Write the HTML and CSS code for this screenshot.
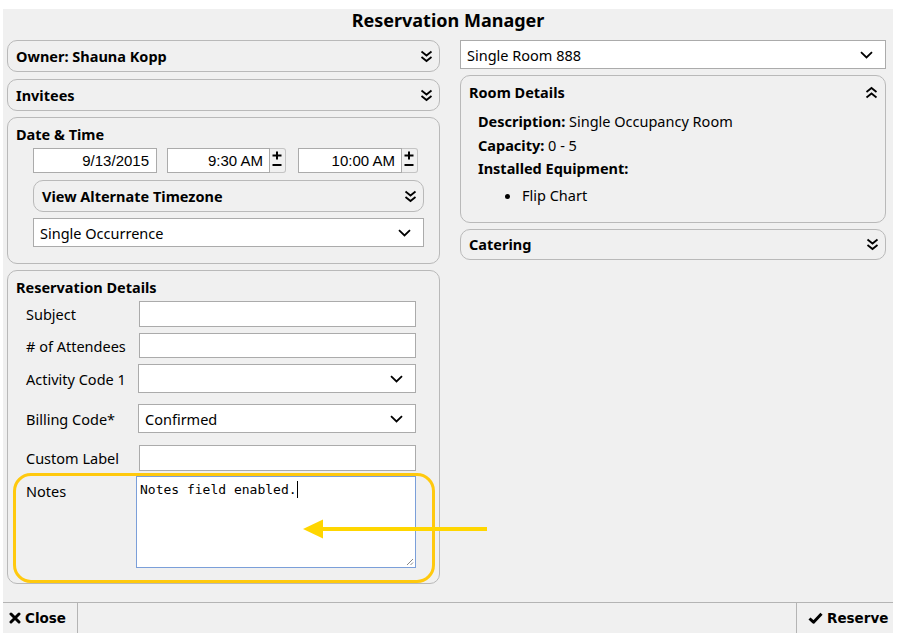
FILE: index.html
```html
<!DOCTYPE html>
<html>
<head>
<meta charset="utf-8">
<link rel="stylesheet" href="styles.css">
</head>
<body>
<div class="app">
  <header class="title">Reservation Manager</header>
  <main class="main">
    <div class="col left">
      <section class="panel collapsed owner">
        <h2 class="panel-title">Owner: Shauna Kopp</h2>
        <svg class="dchev" width="13" height="13" viewBox="0 0 13 13"><path d="M1.5 1.5 L6.5 5.5 L11.5 1.5 M1.5 7 L6.5 11 L11.5 7" fill="none" stroke="#000" stroke-width="1.8"/></svg>
      </section>
      <section class="panel collapsed">
        <h2 class="panel-title">Invitees</h2>
        <svg class="dchev" width="13" height="13" viewBox="0 0 13 13"><path d="M1.5 1.5 L6.5 5.5 L11.5 1.5 M1.5 7 L6.5 11 L11.5 7" fill="none" stroke="#000" stroke-width="1.8"/></svg>
      </section>
      <section class="panel datetime">
        <h2 class="panel-title">Date &amp; Time</h2>
        <div class="dt-body">
          <div class="dt-row">
            <div class="text-input num date-input">9/13/2015</div>
            <div class="time">
              <div class="text-input num time-input">9:30 AM</div>
              <div class="spin"><svg width="16" height="25" viewBox="0 0 16 25"><path d="M3.5 6.5 H12.5 M8 2.5 V10.5 M3.5 16 H12.5" stroke="#000" stroke-width="2" fill="none"/></svg></div>
            </div>
            <div class="time">
              <div class="text-input num time-input">10:00 AM</div>
              <div class="spin"><svg width="16" height="25" viewBox="0 0 16 25"><path d="M3.5 6.5 H12.5 M8 2.5 V10.5 M3.5 16 H12.5" stroke="#000" stroke-width="2" fill="none"/></svg></div>
            </div>
          </div>
          <section class="panel collapsed alt-tz">
            <h2 class="panel-title">View Alternate Timezone</h2>
            <svg class="dchev" width="13" height="13" viewBox="0 0 13 13"><path d="M1.5 1.5 L6.5 5.5 L11.5 1.5 M1.5 7 L6.5 11 L11.5 7" fill="none" stroke="#000" stroke-width="1.8"/></svg>
          </section>
          <div class="select">
            <span>Single Occurrence</span>
            <svg width="13" height="8" viewBox="0 0 13 8"><path d="M1 1.2 L6.5 6.5 L12 1.2" fill="none" stroke="#000" stroke-width="1.8"/></svg>
          </div>
        </div>
      </section>
      <section class="panel details">
        <h2 class="panel-title">Reservation Details</h2>
        <div class="form">
          <div class="row r-subject">
            <span class="label">Subject</span>
            <div class="text-input field"></div>
          </div>
          <div class="row r-attendees">
            <span class="label"># of Attendees</span>
            <div class="text-input field"></div>
          </div>
          <div class="row r-select">
            <span class="label">Activity Code 1</span>
            <div class="select field-select">
              <span></span>
              <svg width="13" height="8" viewBox="0 0 13 8"><path d="M1 1.2 L6.5 6.5 L12 1.2" fill="none" stroke="#000" stroke-width="1.8"/></svg>
            </div>
          </div>
          <div class="row r-select r-billing">
            <span class="label">Billing Code*</span>
            <div class="select field-select">
              <span>Confirmed</span>
              <svg width="13" height="8" viewBox="0 0 13 8"><path d="M1 1.2 L6.5 6.5 L12 1.2" fill="none" stroke="#000" stroke-width="1.8"/></svg>
            </div>
          </div>
          <div class="row r-custom">
            <span class="label">Custom Label</span>
            <div class="text-input field"></div>
          </div>
          <div class="row r-notes">
            <span class="label">Notes</span>
            <div class="textarea"><span class="mono">Notes field enabled.</span><span class="caret"></span>
              <svg class="grip" width="9" height="9" viewBox="0 0 9 9"><path d="M8 2 L2 8 M8 5.5 L5.5 8" stroke="#888" stroke-width="1"/></svg>
            </div>
            <div class="highlight"></div>
            <svg class="arrow" width="186" height="22" viewBox="0 0 186 22"><path d="M0 10 L20 0.5 L20 19.5 Z" fill="#ffd600"/><rect x="18" y="8" width="166" height="4" fill="#ffd600"/></svg>
          </div>
        </div>
      </section>
    </div>
    <div class="col right">
      <div class="select room-select">
        <span>Single Room 888</span>
        <svg width="13" height="8" viewBox="0 0 13 8"><path d="M1 1.2 L6.5 6.5 L12 1.2" fill="none" stroke="#000" stroke-width="1.8"/></svg>
      </div>
      <section class="panel room">
        <div class="room-head">
          <h2 class="panel-title">Room Details</h2>
          <svg class="dchev" width="13" height="13" viewBox="0 0 13 13"><path d="M1.5 6 L6.5 2 L11.5 6 M1.5 11.5 L6.5 7.5 L11.5 11.5" fill="none" stroke="#000" stroke-width="1.8"/></svg>
        </div>
        <div class="room-body">
          <p class="line"><b>Description:</b> Single Occupancy Room</p>
          <p class="line"><b>Capacity:</b> 0 - 5</p>
          <p class="line"><b>Installed Equipment:</b></p>
          <ul class="equip"><li>Flip Chart</li></ul>
        </div>
      </section>
      <section class="panel collapsed catering">
        <h2 class="panel-title">Catering</h2>
        <svg class="dchev" width="13" height="13" viewBox="0 0 13 13"><path d="M1.5 1.5 L6.5 5.5 L11.5 1.5 M1.5 7 L6.5 11 L11.5 7" fill="none" stroke="#000" stroke-width="1.8"/></svg>
      </section>
    </div>
  </main>
  <footer class="footer">
    <div class="btn close">
      <svg width="12" height="12" viewBox="0 0 12 12"><path d="M2 2 L10 10 M10 2 L2 10" stroke="#000" stroke-width="3" stroke-linecap="round"/></svg>
      <span>Close</span>
    </div>
    <div class="btn reserve">
      <svg width="15" height="12" viewBox="0 0 15 12"><path d="M1.5 6.5 L5.5 10.2 L13.5 1.8" fill="none" stroke="#000" stroke-width="3" stroke-linejoin="round"/></svg>
      <span>Reserve</span>
    </div>
  </footer>
</div>
</body>
</html>
```
FILE: styles.css
```css
html, body {
  margin: 0;
  padding: 0;
  background: #ffffff;
}

.app {
  margin: 9px 0 0 3px;
  width: 890px;
  height: 624px;
  background: #f0f0f0;
  display: flex;
  flex-direction: column;
  font-family: "Noto Sans", "Open Sans", sans-serif;
  font-size: 14.5px;
  color: #000;
}

.title {
  height: 31px;
  line-height: 22px;
  text-align: center;
  font-weight: bold;
  font-size: 18px;
}

.main {
  flex: 1;
  display: flex;
  gap: 20px;
  padding: 0 7px 0 4px;
  align-items: flex-start;
}

.col {
  display: flex;
  flex-direction: column;
  gap: 6px;
}

.left { width: 433px; }
.right { width: 426px; }

.panel {
  border: 1px solid #b9b9b9;
  border-radius: 10px;
  box-sizing: border-box;
}

.panel-title {
  margin: 0;
  font-size: 14.5px;
  font-weight: bold;
  line-height: 20px;
}

.collapsed {
  height: 32px;
  display: flex;
  align-items: center;
  justify-content: space-between;
  padding: 0 6px 0 8px;
}

.owner { margin-bottom: 1px; }

.dchev { display: block; }

/* Date & Time */
.datetime {
  padding: 6px 15px 16px 8px;
}

.dt-body {
  margin: 4px 0 0 17px;
  display: flex;
  flex-direction: column;
}

.dt-row {
  display: flex;
  height: 25px;
  gap: 10px;
}

.text-input {
  background: #fff;
  border: 1px solid #ababab;
  box-sizing: border-box;
  height: 100%;
}

.num {
  font-family: "Liberation Sans", Arial, sans-serif;
  font-size: 15px;
  text-align: right;
  line-height: 23px;
  padding-right: 6px;
}

.date-input {
  width: 124px;
  padding-right: 7px;
}

.time {
  display: flex;
  height: 25px;
}

.time + .time { margin-left: 2px; }

.time-input { width: 103px; }
.time + .time .time-input { width: 104px; }

.spin {
  width: 16px;
  height: 25px;
  box-sizing: border-box;
  border: 1px solid #c4c4c4;
  border-left: none;
  border-radius: 0 3px 3px 0;
  background: #f0f0f0;
}

.spin svg {
  display: block;
  margin-left: -1px;
}

.alt-tz {
  margin-top: 7px;
}

.select {
  background: #fff;
  border: 1px solid #ababab;
  box-sizing: border-box;
  height: 29px;
  display: flex;
  align-items: center;
  justify-content: space-between;
  padding: 0 12px 0 6px;
  font-size: 14.5px;
}

.select svg { display: block; }

.dt-body .select { margin-top: 6px; }

/* Reservation details */
.details {
  padding: 6px 8px 15px 8px;
}

.form {
  margin: 4px 0 0 10px;
  display: flex;
  flex-direction: column;
  gap: 6px;
}

.row {
  display: flex;
  align-items: center;
  position: relative;
}

.label {
  width: 113px;
  flex: none;
  font-size: 14.5px;
}

.field {
  width: 277px;
}

.r-subject { height: 26px; }
.r-attendees { height: 25px; }
.r-custom { height: 26px; }
.r-select { height: 29px; margin-bottom: 5px; }
.r-billing { margin-bottom: 6px; }

.field-select {
  width: 278px;
  margin-left: -1px;
}

.r-notes {
  align-items: flex-start;
  height: 92px;
  margin-top: -1px;
}

.r-notes .label {
  padding-top: 5px;
}

.textarea {
  position: relative;
  width: 280px;
  height: 92px;
  margin-left: -3px;
  box-sizing: border-box;
  background: #fff;
  border: 1px solid #7b9fd9;
  padding: 3px 3px;
  line-height: 17px;
}

.mono {
  font-family: "DejaVu Sans Mono", "Liberation Mono", monospace;
  font-size: 13px;
}

.caret {
  display: inline-block;
  width: 1px;
  height: 17px;
  background: #000;
  vertical-align: -4px;
}

.grip {
  position: absolute;
  right: 1px;
  bottom: 1px;
}

.highlight {
  position: absolute;
  left: -13px;
  top: -3px;
  width: 422px;
  height: 110px;
  box-sizing: border-box;
  border: 3px solid #ffc90e;
  border-radius: 18px;
  pointer-events: none;
}

.arrow {
  position: absolute;
  left: 277px;
  top: 43px;
  overflow: visible;
}

/* Right column */
.room {
  padding: 6px 7px 15px 8px;
}

.room-head {
  display: flex;
  align-items: center;
  justify-content: space-between;
}

.room-body {
  margin: 8px 0 0 9px;
}

.line {
  margin: 0;
  line-height: 23.5px;
}

.equip {
  margin: 3px 0 0;
  padding-left: 44px;
  line-height: 23px;
}

.catering {
  height: 31px;
}

/* Footer */
.footer {
  height: 31px;
  box-sizing: border-box;
  border-top: 1px solid #b4b4b4;
  display: flex;
  justify-content: space-between;
}

.btn {
  display: flex;
  align-items: center;
  gap: 4px;
  font-family: "DejaVu Sans", Verdana, sans-serif;
  font-weight: bold;
  font-size: 13.5px;
}

.btn svg { display: block; }

.close {
  width: 75px;
  box-sizing: border-box;
  border-right: 1px solid #b4b4b4;
  padding-left: 6px;
}

.reserve {
  width: 97px;
  box-sizing: border-box;
  border-left: 1px solid #b4b4b4;
  padding-left: 11px;
}
```
